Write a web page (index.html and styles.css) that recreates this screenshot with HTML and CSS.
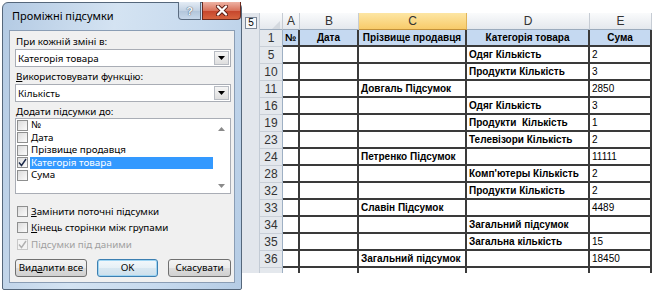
FILE: index.html
```html
<!DOCTYPE html>
<html lang="uk">
<head>
    <meta charset="UTF-8">
    <title>Проміжні підсумки</title>
    <link rel="stylesheet" href="styles.css">
</head>
<body>
    <div class="dialog">
        <div class="titlebar">
            <span class="title">Проміжні підсумки</span>
            <div class="caption-btns">
                <span class="cbtn help">?</span>
                <span class="cbtn close">
                    <svg width="14" height="11" viewBox="0 0 14 11">
                        <path d="M3 1.5 L11 9.5 M11 1.5 L3 9.5" stroke="#5a1a10" stroke-width="4" stroke-linecap="round"/>
                        <path d="M3 1.5 L11 9.5 M11 1.5 L3 9.5" stroke="#fff" stroke-width="2.4" stroke-linecap="round"/>
                    </svg>
                </span>
            </div>
        </div>
        <div class="client">
            <div class="lbl">При кожній зміні в:</div>
            <div class="combo">
                <span class="combo-text">Категорія товара</span>
                <span class="drop"><svg width="7" height="4" viewBox="0 0 7 4"><path d="M0 0 H7 L3.5 4 Z" fill="#000"/></svg></span>
            </div>
            <div class="lbl"><u>В</u>икористовувати функцію:</div>
            <div class="combo">
                <span class="combo-text">Кількість</span>
                <span class="drop"><svg width="7" height="4" viewBox="0 0 7 4"><path d="M0 0 H7 L3.5 4 Z" fill="#000"/></svg></span>
            </div>
            <div class="lbl lbl-list"><u>Д</u>одати підсумки до:</div>
            <div class="listbox">
                <ul class="items">
                    <li><span class="cb"></span><span class="it">№</span></li>
                    <li><span class="cb"></span><span class="it">Дата</span></li>
                    <li><span class="cb"></span><span class="it">Прізвище продавця</span></li>
                    <li class="sel"><span class="cb"><svg width="9" height="9" viewBox="0 0 9 9"><path d="M1 4.5 L3.5 7.5 L8 1" fill="none" stroke="#1c2a4a" stroke-width="1.4"/></svg></span><span class="it">Категорія товара</span></li>
                    <li><span class="cb"></span><span class="it">Сума</span></li>
                </ul>
                <div class="vscroll">
                    <svg width="7" height="4" viewBox="0 0 7 4"><path d="M0 4 H7 L3.5 0 Z" fill="#8a8a8a"/></svg>
                    <svg width="7" height="4" viewBox="0 0 7 4"><path d="M0 0 H7 L3.5 4 Z" fill="#8a8a8a"/></svg>
                </div>
            </div>
            <div class="checks">
                <div class="check"><span class="cb"></span><span><u>З</u>амінити поточні підсумки</span></div>
                <div class="check"><span class="cb"></span><span><u>К</u>інець сторінки між групами</span></div>
                <div class="check disabled"><span class="cb"><svg width="9" height="9" viewBox="0 0 9 9"><path d="M1 4.5 L3.5 7.5 L8 1" fill="none" stroke="#b0b0b0" stroke-width="1.4"/></svg></span><span>Підсумки під даними</span></div>
            </div>
            <div class="buttons">
                <span class="btn btn-wide">Вид<u>а</u>лити все</span>
                <span class="btn btn-ok">OK</span>
                <span class="btn btn-cancel">Скасувати</span>
            </div>
        </div>
    </div>

    <div class="sheet">
        <div class="outline">
            <div class="level">5</div>
        </div>
        <table class="grid">
            <colgroup>
                <col style="width:23px">
                <col style="width:17px">
                <col style="width:59px">
                <col style="width:108px">
                <col style="width:123px">
                <col style="width:62px">
            </colgroup>
            <tr class="colhdr">
                <th class="corner"><svg width="8" height="8" viewBox="0 0 8 8"><path d="M8 0 V8 H0 Z" fill="#d4d9df"/></svg></th>
                <th>A</th>
                <th>B</th>
                <th class="active">C</th>
                <th>D</th>
                <th>E</th>
            </tr>
            <tr class="hd">
                <td class="rh">1</td>
                <td>№</td>
                <td>Дата</td>
                <td>Прізвище продавця</td>
                <td>Категорія товара</td>
                <td>Сума</td>
            </tr>
            <tr><td class="rh">5</td><td></td><td></td><td></td><td class="b">Одяг Кількість</td><td>2</td></tr>
            <tr><td class="rh">10</td><td></td><td></td><td></td><td class="b">Продукти Кількість</td><td>3</td></tr>
            <tr><td class="rh">11</td><td></td><td></td><td class="b">Довгаль Підсумок</td><td></td><td>2850</td></tr>
            <tr><td class="rh">16</td><td></td><td></td><td></td><td class="b">Одяг Кількість</td><td>3</td></tr>
            <tr><td class="rh">19</td><td></td><td></td><td></td><td class="b">Продукти&nbsp; Кількість</td><td>1</td></tr>
            <tr><td class="rh">23</td><td></td><td></td><td></td><td class="b">Телевізори Кількість</td><td>2</td></tr>
            <tr><td class="rh">24</td><td></td><td></td><td class="b">Петренко Підсумок</td><td></td><td>11111</td></tr>
            <tr><td class="rh">28</td><td></td><td></td><td></td><td class="b">Комп'ютеры Кількість</td><td>2</td></tr>
            <tr><td class="rh">32</td><td></td><td></td><td></td><td class="b">Продукти Кількість</td><td>2</td></tr>
            <tr><td class="rh">33</td><td></td><td></td><td class="b">Славін Підсумок</td><td></td><td>4489</td></tr>
            <tr><td class="rh">34</td><td></td><td></td><td></td><td class="b">Загальний підсумок</td><td></td></tr>
            <tr><td class="rh">35</td><td></td><td></td><td></td><td class="b">Загальна кількість</td><td>15</td></tr>
            <tr><td class="rh">36</td><td></td><td></td><td class="b">Загальний підсумок</td><td></td><td>18450</td></tr>
            <tr class="tail"><td class="rh"></td><td></td><td></td><td></td><td></td><td></td></tr>
        </table>
    </div>
</body>
</html>
```

FILE: styles.css
```css
* {
    box-sizing: border-box;
}
body {
    margin: 0;
    width: 658px;
    height: 295px;
    overflow: hidden;
    background: #fff;
    display: flex;
    align-items: flex-start;
    font-family: "Noto Sans", sans-serif;
    color: #000;
}

/* dialog window */
.dialog {
    margin: 2px 0 0 2px;
    width: 240px;
    height: 288px;
    border: 1px solid #55677b;
    border-radius: 6px 6px 2px 2px;
    background: linear-gradient(100deg, #b3cae3 0%, #d4e3f2 40%, #c7daee 70%, #b5cce5 100%);
    padding: 0 6px 6px;
    display: flex;
    flex-direction: column;
}
.titlebar {
    height: 27px;
    display: flex;
    justify-content: space-between;
    align-items: flex-start;
}
.title {
    font-size: 11px;
    margin: 5px 0 0 3px;
}
.caption-btns {
    display: flex;
    margin: -1px -6px 0 0;
    gap: 1px;
}
.cbtn {
    height: 18px;
    border: 1px solid #5b6c80;
    border-top: none;
    display: flex;
    align-items: center;
    justify-content: center;
}
.help {
    width: 23px;
    border-radius: 0 0 0 4px;
    background: linear-gradient(#e4ecf5, #c3d2e3 50%, #b1c4d9 51%, #c8d8ea);
    color: #f4f8fc;
    font: bold 11px "Liberation Sans", sans-serif;
    text-shadow: 0 0 1px #4a5a6c, 0 0 1px #4a5a6c;
}
.close {
    width: 39px;
    border-radius: 0 0 4px 0;
    border-color: #6b2a1f;
    background: linear-gradient(#eeb2a4, #d9735c 50%, #c5442b 51%, #d7643f);
}

.client {
    flex: 1;
    background: #f0f0f0;
    border: 1px solid #8a9db4;
    padding: 4px 3px 0 5px;
    font-size: 9.8px;
}
.lbl {
    height: 13px;
    line-height: 13px;
    padding-left: 1px;
}
.combo {
    margin: 1px 0 3px;
    height: 18px;
    border: 1px solid #a9adb5;
    background: #fff;
    display: flex;
    align-items: center;
    justify-content: space-between;
    padding: 0 1px 0 2px;
}
.drop {
    width: 15px;
    height: 14px;
    border: 1px solid #b8bcc3;
    background: linear-gradient(#f5f5f5, #dedede);
    display: flex;
    align-items: center;
    justify-content: center;
}
.lbl-list {
    margin-top: 2px;
}
.listbox {
    height: 76px;
    border: 1px solid #a9adb5;
    background: #fff;
    display: flex;
}
.items {
    list-style: none;
    margin: 0;
    padding: 0 0 0 1px;
    flex: 1;
}
.items li {
    height: 12.5px;
    display: flex;
    align-items: center;
}
.cb {
    width: 11px;
    height: 11px;
    border: 1px solid #8e8f8f;
    background: linear-gradient(135deg, #dcdcdc, #fbfbfb);
    display: flex;
    align-items: center;
    justify-content: center;
    flex: none;
}
.it {
    margin-left: 2px;
    padding: 0 1px;
    line-height: 12px;
    flex: 1;
}
.sel .it {
    background: #3399ff;
    color: #fff;
}
.vscroll {
    width: 17px;
    display: flex;
    flex-direction: column;
    justify-content: space-between;
    align-items: center;
    padding: 8px 0 5px;
}

.checks {
    margin-top: 9px;
}
.check {
    height: 16.5px;
    display: flex;
    align-items: center;
    padding-left: 2px;
    gap: 3px;
}
.disabled {
    color: #a0a0a0;
}
.disabled .cb {
    border-color: #c8c8c8;
    background: #f4f4f4;
}

.buttons {
    margin-top: 6px;
    display: flex;
    justify-content: space-between;
}
.btn {
    height: 18px;
    border: 1px solid #707070;
    border-radius: 3px;
    background: linear-gradient(#f3f3f3, #ebebeb 50%, #dddddd 51%, #d0d0d0);
    display: flex;
    align-items: center;
    justify-content: center;
}
.btn-wide {
    width: 72px;
}
.btn-ok {
    width: 61px;
    border-color: #3c7fb1;
    box-shadow: inset 0 0 0 1px #9fd5f3;
    background: linear-gradient(#f3f8fb, #e6f0f6 50%, #d8e7f1 51%, #cde0ec);
}
.btn-cancel {
    width: 63px;
}

/* spreadsheet */
.sheet {
    margin-top: 13px;
    display: flex;
    align-items: flex-start;
}
.outline {
    width: 18px;
    height: 260px;
    background: #e2e6ec;
    border-right: 1px solid #c3cbd5;
    padding: 4px 0 0 3px;
}
.level {
    width: 12px;
    height: 12px;
    border: 1px solid #7c8898;
    background: #f7f8fa;
    font: 10px/10px "Liberation Sans", sans-serif;
    text-align: center;
}
.grid {
    border-collapse: separate;
    border-spacing: 0;
    table-layout: fixed;
    width: 392px;
    font-family: "Liberation Sans", Arial, sans-serif;
    font-size: 10px;
}
.grid td,
.grid th {
    height: 17px;
    padding: 0 2px;
    border-right: 2px solid #3a3a3a;
    border-bottom: 2px solid #3a3a3a;
    white-space: nowrap;
    overflow: hidden;
    text-align: left;
}
.colhdr th {
    font-weight: normal;
    font-size: 12px;
    color: #333;
    text-align: center;
    background: linear-gradient(#fafbfc, #e4e8ed);
    border-right: 1px solid #c6ccd4;
    border-bottom: 1px solid #9babbd;
}
.colhdr .active {
    background: linear-gradient(#fde6a4, #f8cb6a);
    border-right-color: #e0b45a;
    border-bottom-color: #c2913a;
}
.corner {
    text-align: right !important;
    vertical-align: bottom;
    line-height: 0;
}
.grid .rh {
    font-size: 12px;
    color: #333;
    text-align: center;
    background: #e4e8ed;
    border-right: 1px solid #9eb0c4;
    border-bottom: 1px solid #c9cfd7;
    padding: 0;
}
.hd td {
    background: #c5d9f1;
    font-weight: bold;
    text-align: center;
}
.hd .rh {
    font-weight: normal;
}
.b {
    font-weight: bold;
}
.grid .tail td {
    height: 5px;
    border-bottom: none;
}
```
